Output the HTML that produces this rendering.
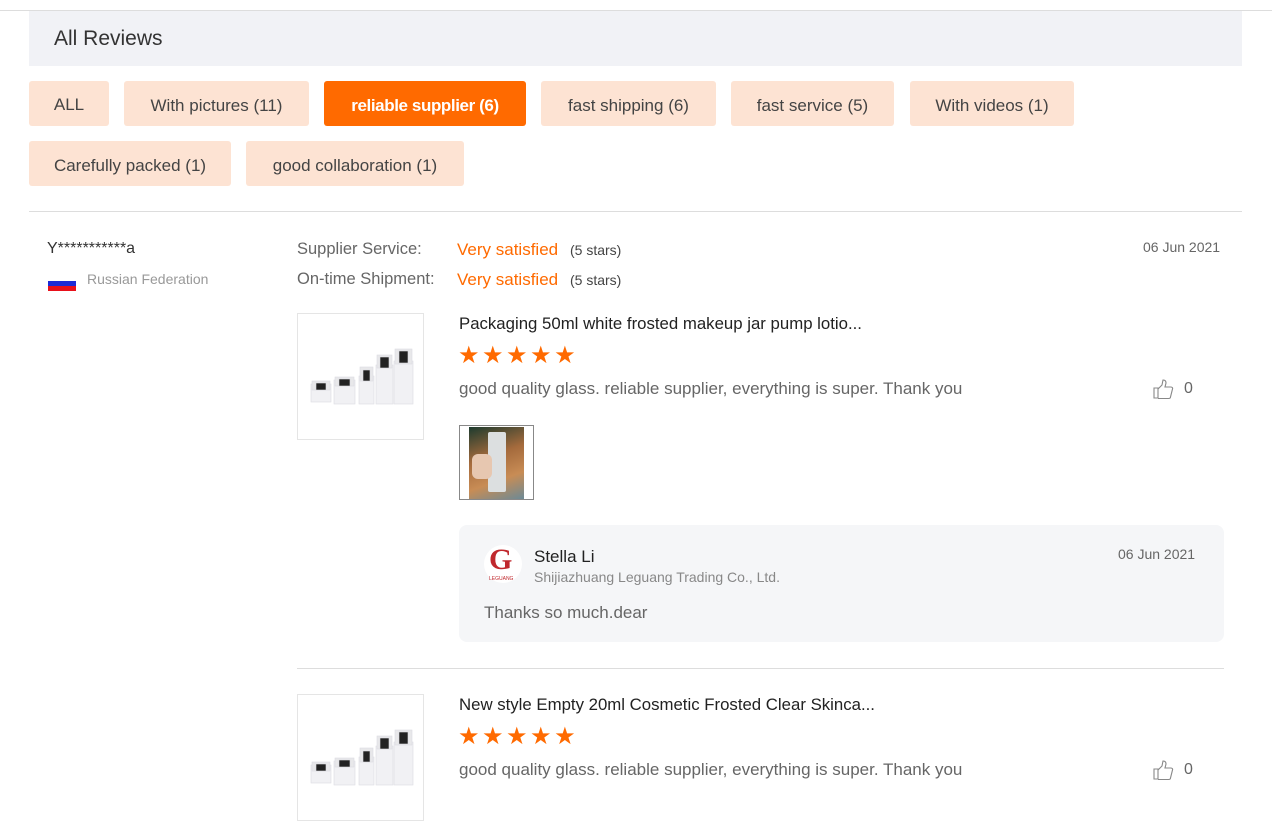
<!DOCTYPE html>
<html><head><meta charset="utf-8"><style>
*{margin:0;padding:0;box-sizing:border-box}
body{width:1272px;height:821px;background:#fff;font-family:"Liberation Sans",sans-serif;position:relative;overflow:hidden;color:#333}
.a{position:absolute;white-space:nowrap}
.tag{position:absolute;height:45px;background:#fde3d3;border-radius:3px;font-size:17px;color:#444;line-height:49px;text-align:center}
.tag.on{background:#ff6a00;color:#fff;font-weight:bold;letter-spacing:-0.4px}
.g{color:#666}
.o{color:#ff6a00}
.star{color:#ff6a00;font-size:24px;letter-spacing:2.5px}
.img{position:absolute;width:127px;height:127px;border:1px solid #e5e5e5;background:#fff}
</style></head><body>
<div class="a" style="left:0;top:10px;width:1272px;height:1px;background:#ddd"></div>
<div class="a" style="left:29px;top:11px;width:1213px;height:55px;background:#f1f2f6"></div>
<div class="a" style="left:54px;top:27px;font-size:21px;color:#333">All Reviews</div>

<div class="tag" style="left:29px;top:81px;width:80px;line-height:47px">ALL</div>
<div class="tag" style="left:124px;top:81px;width:185px">With pictures (11)</div>
<div class="tag on" style="left:324px;top:81px;width:202px">reliable supplier (6)</div>
<div class="tag" style="left:541px;top:81px;width:175px">fast shipping (6)</div>
<div class="tag" style="left:731px;top:81px;width:163px">fast service (5)</div>
<div class="tag" style="left:910px;top:81px;width:164px">With videos (1)</div>
<div class="tag" style="left:29px;top:141px;width:202px">Carefully packed (1)</div>
<div class="tag" style="left:246px;top:141px;width:218px">good collaboration (1)</div>

<div class="a" style="left:29px;top:211px;width:1213px;height:1px;background:#ddd"></div>

<div class="a" style="left:47px;top:240px;font-size:16px;color:#333">Y***********a</div>
<div class="a" style="left:48px;top:276px;width:28px;height:14px"><div style="height:5px;background:#fff"></div><div style="height:5px;background:#1c2bd6"></div><div style="height:5px;background:#e8101a"></div></div>
<div class="a" style="left:87px;top:271px;font-size:14px;color:#999">Russian Federation</div>

<div class="a g" style="left:297px;top:240px;font-size:16.5px">Supplier Service:</div>
<div class="a o" style="left:457px;top:240px;font-size:17px">Very satisfied</div>
<div class="a" style="left:570px;top:242px;font-size:14px;color:#444">(5 stars)</div>
<div class="a g" style="left:297px;top:270px;font-size:16.5px">On-time Shipment:</div>
<div class="a o" style="left:457px;top:270px;font-size:17px">Very satisfied</div>
<div class="a" style="left:570px;top:272px;font-size:14px;color:#444">(5 stars)</div>
<div class="a" style="left:1143px;top:239px;font-size:14px;color:#666">06 Jun 2021</div>

<svg width="0" height="0" style="position:absolute"><defs>
<g id="bt" fill="#f1f1f4" stroke="#dcdce2" stroke-width="0.6">
<rect x="13" y="70" width="20" height="18"/><rect x="14" y="67" width="18" height="9" fill="#e8e8ea"/><rect x="18" y="69" width="10" height="7" fill="#222"/>
<rect x="36" y="66" width="21" height="24"/><rect x="37" y="63" width="19" height="9" fill="#e8e8ea"/><rect x="41" y="65" width="11" height="7" fill="#222"/>
<rect x="61" y="62" width="15" height="28"/><rect x="62" y="53" width="13" height="14" fill="#e8e8ea"/><rect x="65" y="56" width="7" height="11" fill="#222"/>
<rect x="78" y="51" width="17" height="39"/><rect x="79" y="41" width="15" height="13" fill="#e8e8ea"/><rect x="82" y="43" width="9" height="11" fill="#222"/>
<rect x="96" y="47" width="19" height="43"/><rect x="97" y="35" width="17" height="15" fill="#e8e8ea"/><rect x="101" y="37" width="9" height="12" fill="#222"/>
</g>
<g id="th" fill="none" stroke="#888" stroke-width="1.1"><path d="M1 9h4v10H1z"/><path d="M5 10l4-4 1-5c2 0 3 1 3 3l-1 4h6c1 0 2 1 1.5 2l-2 8c0 1-1 1.5-2 1.5H5"/></g>
</defs></svg>

<div class="img" style="left:297px;top:313px"><svg width="127" height="127"><use href="#bt"/></svg></div>
<div class="a" style="left:459px;top:314px;font-size:16.8px;color:#222">Packaging 50ml white frosted makeup jar pump lotio...</div>
<div class="a star" style="left:458px;top:341px">★★★★★</div>
<div class="a g" style="left:459px;top:379px;font-size:17px">good quality glass. reliable supplier, everything is super. Thank you</div>
<svg class="a" style="left:1153px;top:379px" width="22" height="22"><use href="#th"/></svg>
<div class="a" style="left:1184px;top:380px;font-size:16px;color:#666">0</div>

<div class="a" style="left:459px;top:425px;width:75px;height:75px;border:1px solid #888;background:#fff">
<div style="position:absolute;left:9px;top:1px;width:55px;height:72px;background:linear-gradient(160deg,#1c3a2e 0%,#a46a3c 40%,#c88c55 70%,#6c8a96 100%)"></div>
<div style="position:absolute;left:28px;top:6px;width:18px;height:60px;background:#dcdfe0;border-radius:2px"></div>
<div style="position:absolute;left:12px;top:28px;width:20px;height:25px;background:#e7c7b0;border-radius:6px"></div>
</div>

<div class="a" style="left:459px;top:525px;width:765px;height:117px;background:#f5f6f8;border-radius:8px"></div>
<div class="a" style="left:484px;top:545px;width:38px;height:38px;border-radius:50%;background:#fff"></div>
<div class="a" style="left:489px;top:543px;font-size:30px;font-weight:bold;color:#c0282d;font-family:'Liberation Serif',serif">G</div>
<div class="a" style="left:489px;top:576px;font-size:5px;color:#c0282d">LEGUANG</div>
<div class="a" style="left:534px;top:547px;font-size:17px;color:#222">Stella Li</div>
<div class="a" style="left:534px;top:569px;font-size:14px;color:#888">Shijiazhuang Leguang Trading Co., Ltd.</div>
<div class="a" style="left:1118px;top:546px;font-size:14px;color:#666">06 Jun 2021</div>
<div class="a g" style="left:484px;top:603px;font-size:17px">Thanks so much.dear</div>

<div class="a" style="left:297px;top:668px;width:927px;height:1px;background:#ddd"></div>

<div class="img" style="left:297px;top:694px"><svg width="127" height="127"><use href="#bt"/></svg></div>
<div class="a" style="left:459px;top:695px;font-size:16.8px;color:#222">New style Empty 20ml Cosmetic Frosted Clear Skinca...</div>
<div class="a star" style="left:458px;top:722px">★★★★★</div>
<div class="a g" style="left:459px;top:760px;font-size:17px">good quality glass. reliable supplier, everything is super. Thank you</div>
<svg class="a" style="left:1153px;top:760px" width="22" height="22"><use href="#th"/></svg>
<div class="a" style="left:1184px;top:761px;font-size:16px;color:#666">0</div>
</body></html>
